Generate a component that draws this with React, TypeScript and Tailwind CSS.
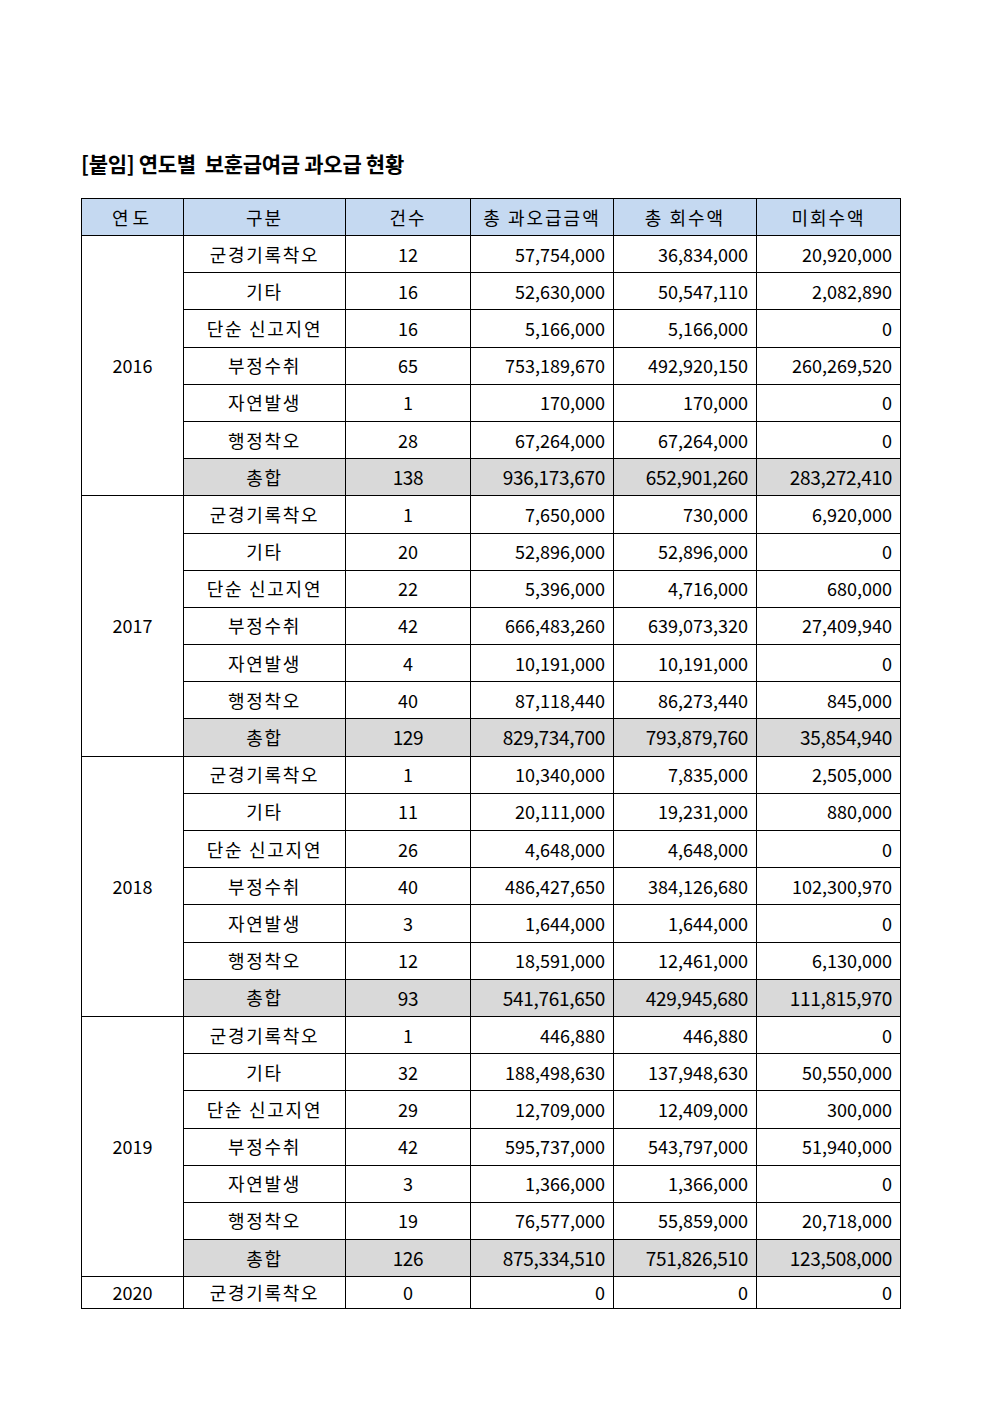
type Row = [string, string, string, string, string];

const years: { year: string; rows: Row[] }[] = [
  {
    year: "2016",
    rows: [
      ["군경기록착오", "12", "57,754,000", "36,834,000", "20,920,000"],
      ["기타", "16", "52,630,000", "50,547,110", "2,082,890"],
      ["단순 신고지연", "16", "5,166,000", "5,166,000", "0"],
      ["부정수취", "65", "753,189,670", "492,920,150", "260,269,520"],
      ["자연발생", "1", "170,000", "170,000", "0"],
      ["행정착오", "28", "67,264,000", "67,264,000", "0"],
      ["총합", "138", "936,173,670", "652,901,260", "283,272,410"],
    ],
  },
  {
    year: "2017",
    rows: [
      ["군경기록착오", "1", "7,650,000", "730,000", "6,920,000"],
      ["기타", "20", "52,896,000", "52,896,000", "0"],
      ["단순 신고지연", "22", "5,396,000", "4,716,000", "680,000"],
      ["부정수취", "42", "666,483,260", "639,073,320", "27,409,940"],
      ["자연발생", "4", "10,191,000", "10,191,000", "0"],
      ["행정착오", "40", "87,118,440", "86,273,440", "845,000"],
      ["총합", "129", "829,734,700", "793,879,760", "35,854,940"],
    ],
  },
  {
    year: "2018",
    rows: [
      ["군경기록착오", "1", "10,340,000", "7,835,000", "2,505,000"],
      ["기타", "11", "20,111,000", "19,231,000", "880,000"],
      ["단순 신고지연", "26", "4,648,000", "4,648,000", "0"],
      ["부정수취", "40", "486,427,650", "384,126,680", "102,300,970"],
      ["자연발생", "3", "1,644,000", "1,644,000", "0"],
      ["행정착오", "12", "18,591,000", "12,461,000", "6,130,000"],
      ["총합", "93", "541,761,650", "429,945,680", "111,815,970"],
    ],
  },
  {
    year: "2019",
    rows: [
      ["군경기록착오", "1", "446,880", "446,880", "0"],
      ["기타", "32", "188,498,630", "137,948,630", "50,550,000"],
      ["단순 신고지연", "29", "12,709,000", "12,409,000", "300,000"],
      ["부정수취", "42", "595,737,000", "543,797,000", "51,940,000"],
      ["자연발생", "3", "1,366,000", "1,366,000", "0"],
      ["행정착오", "19", "76,577,000", "55,859,000", "20,718,000"],
      ["총합", "126", "875,334,510", "751,826,510", "123,508,000"],
    ],
  },
];

const font = { fontFamily: '"Noto Sans CJK KR", "Noto Sans", sans-serif' };

function Cells({ row, total }: { row: Row; total: boolean }) {
  const bg = total ? "bg-[#d9d9d9]" : "";
  const num = total ? "text-[19px] tracking-[-0.3px]" : "";
  return (
    <>
      <td className={`border border-black text-center tracking-[1.7px] ${bg}`}>{row[0]}</td>
      <td className={`border border-black text-center ${bg} ${num}`}>{row[1]}</td>
      <td className={`border border-black text-right pr-2 ${bg} ${num}`}>{row[2]}</td>
      <td className={`border border-black text-right pr-2 ${bg} ${num}`}>{row[3]}</td>
      <td className={`border border-black text-right pr-2 ${bg} ${num}`}>{row[4]}</td>
    </>
  );
}

export default function App() {
  return (
    <div className="w-[992px] h-[1403px] bg-white text-black pt-[148px] pl-[81px]" style={font}>
      <h1 className="text-[21px] font-bold leading-[30px] mb-[20px] whitespace-pre tracking-[-0.3px]">[붙임] 연도별  보훈급여금 과오급 현황</h1>
      <table className="border-collapse text-[18px] w-[819px] table-fixed">
        <colgroup>
          <col className="w-[102px]" />
          <col className="w-[162px]" />
          <col className="w-[125px]" />
          <col className="w-[143px]" />
          <col className="w-[143px]" />
          <col className="w-[144px]" />
        </colgroup>
        <thead>
          <tr className="h-[37px] bg-[#c5d9f1]">
            <th className="border border-black font-normal tracking-[4px]">연도</th>
            <th className="border border-black font-normal tracking-[2px]">구분</th>
            <th className="border border-black font-normal tracking-[2px]">건수</th>
            <th className="border border-black font-normal tracking-[2px]">총 과오급금액</th>
            <th className="border border-black font-normal tracking-[2px]">총 회수액</th>
            <th className="border border-black font-normal tracking-[2px]">미회수액</th>
          </tr>
        </thead>
        <tbody>
          {years.map((y) =>
            y.rows.map((r, i) => (
              <tr key={y.year + i} className="h-[37.2px]">
                {i === 0 && (
                  <td rowSpan={7} className="border border-black text-center">
                    {y.year}
                  </td>
                )}
                <Cells row={r} total={i === 6} />
              </tr>
            ))
          )}
          <tr className="h-[32px]">
            <td className="border border-black text-center">2020</td>
            <Cells row={["군경기록착오", "0", "0", "0", "0"]} total={false} />
          </tr>
        </tbody>
      </table>
    </div>
  );
}
